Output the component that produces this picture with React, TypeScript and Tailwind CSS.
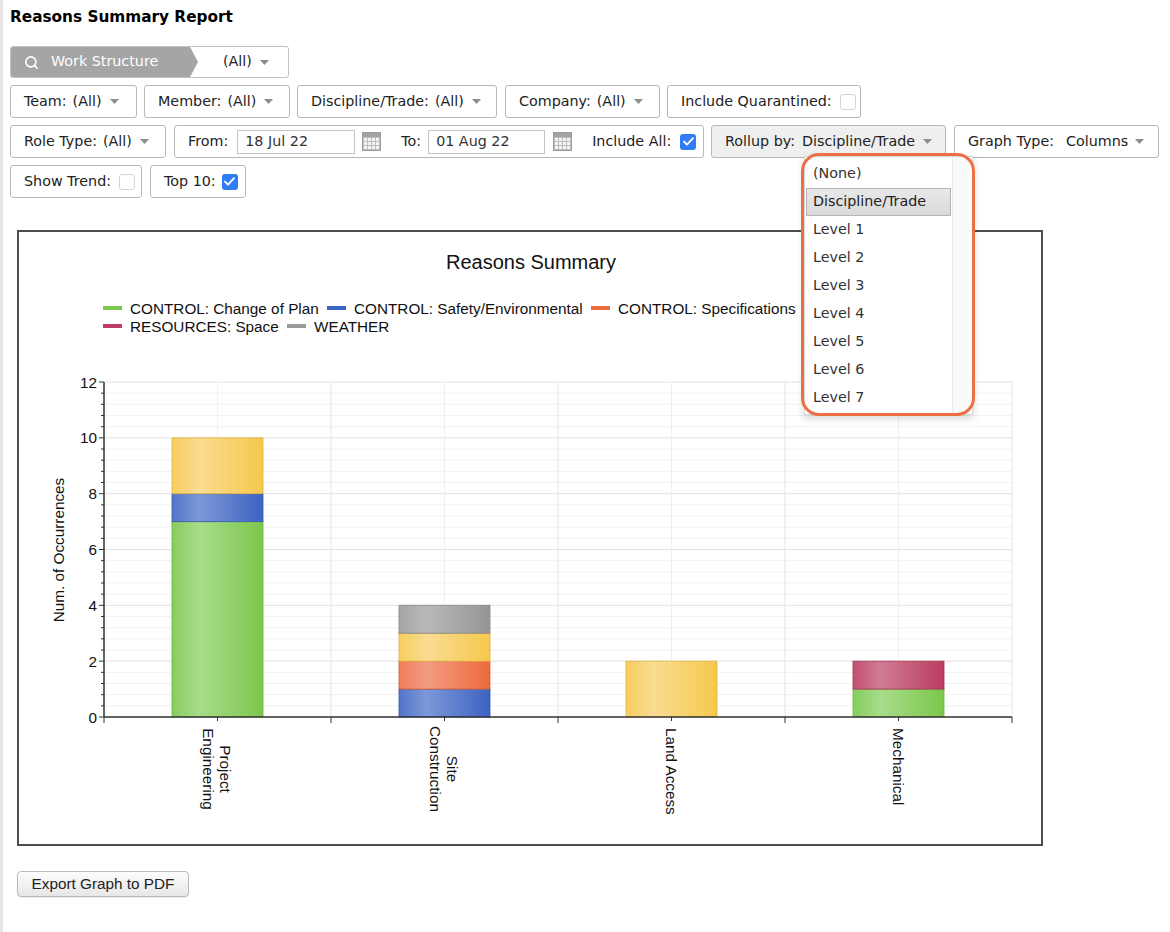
import type { ReactNode } from "react";
import { Search } from "lucide-react";

const FONT = "font-['DejaVu_Sans',Verdana,sans-serif]";
const ARIAL = "Liberation Sans, Arial, sans-serif";

function Caret({ className = "" }: { className?: string }) {
  return (
    <svg width="9" height="5" viewBox="0 0 9 5" className={`shrink-0 ${className}`}>
      <path d="M0 0h9L4.5 5z" fill="#8d8d8d" />
    </svg>
  );
}

function Checkbox({ checked, className = "" }: { checked?: boolean; className?: string }) {
  if (checked) {
    return (
      <span
        className={`flex h-[16px] w-[16px] shrink-0 items-center justify-center rounded-[3px] bg-[#2f7cf6] ${className}`}
      >
        <svg width="11" height="9" viewBox="0 0 11 9">
          <path d="M1 4.6l3 3L10 1.2" fill="none" stroke="white" strokeWidth="1.9" strokeLinecap="round" strokeLinejoin="round" />
        </svg>
      </span>
    );
  }
  return (
    <span
      className={`block h-[16px] w-[16px] shrink-0 rounded-[3px] border border-[#d6d6d6] bg-white ${className}`}
    />
  );
}

function CalendarIcon({ className = "" }: { className?: string }) {
  const cells = [];
  for (let r = 0; r < 3; r++) {
    for (let c = 0; c < 4; c++) {
      cells.push(<rect key={`${r}-${c}`} x={2 + c * 4} y={6 + r * 4} width="3" height="3" fill="#f4f4f4" />);
    }
  }
  return (
    <svg width="19" height="19" viewBox="0 0 19 19" className={`shrink-0 ${className}`}>
      <rect x="0.5" y="0.5" width="18" height="18" fill="#bdbdbd" stroke="#9b9b9b" />
      <rect x="1" y="1" width="17" height="4" fill="#a3a3a3" />
      {cells}
    </svg>
  );
}

function Box({ className = "", children }: { className?: string; children: ReactNode }) {
  return (
    <div
      className={`flex h-[33px] shrink-0 items-center rounded-[3px] border border-[#b8b8b8] pl-[13px] text-[14.3px] text-[#222] ${className}`}
    >
      {children}
    </div>
  );
}

function Select({ label, value, className }: { label: string; value: string; className: string }) {
  return (
    <Box className={`bg-white ${className}`}>
      <span>{label}</span>
      <span className="ml-[6px]">{value}</span>
      <Caret className="ml-[8px]" />
    </Box>
  );
}

const ROLLUP_OPTIONS = ["(None)", "Discipline/Trade", "Level 1", "Level 2", "Level 3", "Level 4", "Level 5", "Level 6", "Level 7"];

type Tone = "green" | "blue" | "yellow" | "orange" | "gray" | "crimson";

const TONES: Record<Tone, { edge: string; light: string; dark: string; solid: string }> = {
  green: { edge: "#86cd5e", light: "#a8dc8a", dark: "#7cc74c", solid: "#7dc94f" },
  blue: { edge: "#5275c9", light: "#7c98d9", dark: "#3d63c2", solid: "#3c66c6" },
  yellow: { edge: "#f7cd5e", light: "#f9dc92", dark: "#f6c84c", solid: "#f6c84c" },
  orange: { edge: "#f07d59", light: "#f39c80", dark: "#ec6a3e", solid: "#ee6b3f" },
  gray: { edge: "#a4a4a4", light: "#b9b9b9", dark: "#959595", solid: "#9b9b9b" },
  crimson: { edge: "#c34f70", light: "#d07d94", dark: "#ba3c60", solid: "#c03e63" },
};

const STROKES: Record<Tone, string> = {
  green: "#6db341",
  blue: "#3358b0",
  yellow: "#e2b341",
  orange: "#d85c33",
  gray: "#858585",
  crimson: "#a53253",
};

const DATA: { label: string[]; segs: [Tone, number][] }[] = [
  { label: ["Project", "Engineering"], segs: [["green", 7], ["blue", 1], ["yellow", 2]] },
  { label: ["Site", "Construction"], segs: [["blue", 1], ["orange", 1], ["yellow", 1], ["gray", 1]] },
  { label: ["Land Access"], segs: [["yellow", 2]] },
  { label: ["Mechanical"], segs: [["green", 1], ["crimson", 1]] },
];

const LEGEND: { tone: Tone; text: string; x: number; y: number }[] = [
  { tone: "green", text: "CONTROL: Change of Plan", x: 84, y: 76 },
  { tone: "blue", text: "CONTROL: Safety/Environmental", x: 308, y: 76 },
  { tone: "orange", text: "CONTROL: Specifications", x: 572, y: 76 },
  { tone: "crimson", text: "RESOURCES: Space", x: 84, y: 94 },
  { tone: "gray", text: "WEATHER", x: 268, y: 94 },
];

function Chart() {
  const x0 = 85;
  const x1 = 993;
  const y0 = 485;
  const unit = 335 / 12;
  const cat = (x1 - x0) / 4;
  const barW = 91;

  const minor = [];
  for (let i = 0; i <= 30; i++) {
    const y = y0 - i * 0.4 * unit;
    const major = i % 5 === 0;
    minor.push(
      <g key={i}>
        <line x1={x0} x2={x1} y1={y} y2={y} stroke={major ? "#e2e2e2" : "#f1f1f1"} strokeWidth="1" />
        <line x1={major ? x0 - 5 : x0 - 3} x2={x0} y1={y} y2={y} stroke="#333" strokeWidth="1" />
      </g>
    );
  }

  return (
    <svg width="1022" height="612" viewBox="0 0 1022 612" className="block">
      <defs>
        {(Object.keys(TONES) as Tone[]).map((t) => (
          <linearGradient key={t} id={`g-${t}`} x1="0" x2="1" y1="0" y2="0">
            <stop offset="0" stopColor={TONES[t].edge} />
            <stop offset="0.3" stopColor={TONES[t].light} />
            <stop offset="1" stopColor={TONES[t].dark} />
          </linearGradient>
        ))}
      </defs>

      <text x="512" y="30" textAnchor="middle" dominantBaseline="central" fontFamily={ARIAL} fontSize="20" fill="#111">
        Reasons Summary
      </text>

      {LEGEND.map((l) => (
        <g key={l.text}>
          <rect x={l.x} y={l.y - 2} width="19" height="4" fill={TONES[l.tone].solid} />
          <text x={l.x + 27} y={l.y} dominantBaseline="central" fontFamily={ARIAL} fontSize="15.3" fill="#111">
            {l.text}
          </text>
        </g>
      ))}

      {/* grid */}
      {minor}
      {[0, 1, 2, 3].map((i) => (
        <line key={`c${i}`} x1={x0 + cat * i + cat / 2} x2={x0 + cat * i + cat / 2} y1={y0 - 12 * unit} y2={y0} stroke="#f0f0f0" />
      ))}
      {[1, 2, 3, 4].map((i) => (
        <line key={`b${i}`} x1={x0 + cat * i} x2={x0 + cat * i} y1={y0 - 12 * unit} y2={y0} stroke="#e4e4e4" />
      ))}

      {/* bars */}
      {DATA.map((d, i) => {
        const cx = x0 + cat * i + cat / 2;
        let acc = 0;
        return (
          <g key={d.label.join(" ")}>
            {d.segs.map(([tone, v], j) => {
              const top = y0 - (acc + v) * unit;
              const h = v * unit;
              acc += v;
              return (
                <rect
                  key={j}
                  x={cx - barW / 2}
                  y={top}
                  width={barW}
                  height={h}
                  fill={`url(#g-${tone})`}
                  stroke={STROKES[tone]}
                  strokeWidth="1"
                  strokeOpacity="0.8"
                />
              );
            })}
          </g>
        );
      })}

      {/* axes */}
      <line x1={x0} x2={x0} y1={y0 - 12 * unit} y2={y0} stroke="#333" strokeWidth="1.5" />
      <line x1={x0} x2={x1} y1={y0} y2={y0} stroke="#333" strokeWidth="1.5" />
      {[0, 1, 2, 3, 4].map((i) => (
        <line key={`t${i}`} x1={x0 + cat * i} x2={x0 + cat * i} y1={y0} y2={y0 + 6} stroke="#333" />
      ))}
      {[0, 1, 2, 3].map((i) => (
        <line key={`m${i}`} x1={x0 + cat * i + cat / 2} x2={x0 + cat * i + cat / 2} y1={y0} y2={y0 + 4} stroke="#333" />
      ))}

      {[0, 2, 4, 6, 8, 10, 12].map((v) => (
        <text key={v} x="78" y={y0 - v * unit} textAnchor="end" dominantBaseline="central" fontFamily={ARIAL} fontSize="15.3" fill="#111">
          {v}
        </text>
      ))}

      <text
        transform="translate(39 318) rotate(-90)"
        textAnchor="middle"
        dominantBaseline="central"
        fontFamily={ARIAL}
        fontSize="15.3"
        fill="#111"
      >
        Num. of Occurrences
      </text>

      {DATA.map((d, i) => {
        const cx = x0 + cat * i + cat / 2;
        if (d.label.length === 1) {
          return (
            <text
              key={`l${i}`}
              transform={`translate(${cx} 496) rotate(90)`}
              dominantBaseline="central"
              fontFamily={ARIAL}
              fontSize="15.3"
              fill="#111"
            >
              {d.label[0]}
            </text>
          );
        }
        return (
          <g key={`l${i}`}>
            <text
              transform={`translate(${cx + 8} 537) rotate(90)`}
              textAnchor="middle"
              dominantBaseline="central"
              fontFamily={ARIAL}
              fontSize="15.3"
              fill="#111"
            >
              {d.label[0]}
            </text>
            <text
              transform={`translate(${cx - 9} 537) rotate(90)`}
              textAnchor="middle"
              dominantBaseline="central"
              fontFamily={ARIAL}
              fontSize="15.3"
              fill="#111"
            >
              {d.label[1]}
            </text>
          </g>
        );
      })}
    </svg>
  );
}

export default function App() {
  return (
    <div className={`min-h-[932px] w-full border-l-[3px] border-[#e6e6e6] bg-white pl-[7px] pt-[7px] ${FONT}`}>
      <h1 className="h-[20px] text-[15.3px] font-bold leading-[20px] text-black">Reasons Summary Report</h1>

      <div className="mt-[19px] flex flex-col gap-[7px]">
        {/* Work structure breadcrumb */}
        <div className="flex h-[32px] w-[279px] overflow-hidden rounded-[3px] border border-[#c2c2c2] bg-white text-[14.3px]">
          <div className="flex w-[187px] shrink-0 items-center bg-[#a5a5a5] pl-[13px] text-white [clip-path:polygon(0_0,179px_0,187px_50%,179px_100%,0_100%)]">
            <Search size={15} strokeWidth={2.6} />
            <span className="ml-[12px]">Work Structure</span>
          </div>
          <div className="flex items-center pl-[25px] text-[#222]">
            <span>(All)</span>
            <Caret className="ml-[8px]" />
          </div>
        </div>

        <div className="flex gap-[7px]">
          <Select label="Team:" value="(All)" className="w-[127px]" />
          <Select label="Member:" value="(All)" className="w-[146px]" />
          <Select label="Discipline/Trade:" value="(All)" className="w-[200px]" />
          <Select label="Company:" value="(All)" className="ml-[1px] w-[155px]" />
          <Box className="w-[194px] bg-white">
            <span>Include Quarantined:</span>
            <Checkbox className="ml-[8px]" />
          </Box>
        </div>

        <div className="flex gap-[7px]">
          <Select label="Role Type:" value="(All)" className="w-[156px]" />
          <Box className="ml-[1px] w-[530px] bg-white">
            <span>From:</span>
            <div className="ml-[9px] flex h-[24px] w-[118px] items-center border border-[#c4c4c4] pl-[7px] text-[#333]">18 Jul 22</div>
            <CalendarIcon className="ml-[7px]" />
            <span className="ml-[20px]">To:</span>
            <div className="ml-[7px] flex h-[24px] w-[117px] items-center border border-[#c4c4c4] pl-[7px] text-[#333]">01 Aug 22</div>
            <CalendarIcon className="ml-[8px]" />
            <span className="ml-[20px]">Include All:</span>
            <Checkbox checked className="ml-[9px]" />
          </Box>
          <div className="relative">
            <Box className="w-[235px] bg-[#efefef] pl-[12px]">
              <span>Rollup by:</span>
              <span className="ml-[7px]">Discipline/Trade</span>
              <Caret className="ml-[8px]" />
            </Box>
            {/* open dropdown */}
            <div className="absolute left-[93px] top-[31px] z-10 flex h-[259px] w-[169px] border border-[#d8d8d8] bg-white shadow-[0_3px_8px_rgba(0,0,0,0.18)]">
              <div className="flex w-[147px] flex-col pt-[3px] text-[14.3px] text-[#333]">
                {ROLLUP_OPTIONS.map((o) =>
                  o === "Discipline/Trade" ? (
                    <div
                      key={o}
                      className="ml-[1px] flex h-[28px] w-[145px] items-center border border-[#b4b4b4] bg-[linear-gradient(#e9e9e9,#d9d9d9)] pl-[6px] text-[#222]"
                    >
                      {o}
                    </div>
                  ) : (
                    <div key={o} className="flex h-[28px] items-center pl-[8px]">
                      {o}
                    </div>
                  )
                )}
              </div>
              <div className="w-[18px] border-l border-[#ececec] bg-[#f9f9f9]" />
            </div>
            <div className="pointer-events-none absolute left-[90px] top-[28px] z-20 h-[263px] w-[174px] rounded-[18px] border-[3px] border-[#ef6f45]" />
          </div>
          <Box className="ml-[1px] w-[205px] bg-white">
            <span>Graph Type:</span>
            <span className="ml-[12px]">Columns</span>
            <Caret className="ml-[7px]" />
          </Box>
        </div>

        <div className="flex gap-[7px]">
          <Box className="w-[132px] bg-white">
            <span>Show Trend:</span>
            <Checkbox className="ml-[8px]" />
          </Box>
          <Box className="ml-[1px] w-[96px] bg-white">
            <span>Top 10:</span>
            <Checkbox checked className="ml-[6px]" />
          </Box>
        </div>
      </div>

      <div className="ml-[7px] mt-[32px] w-[1026px] border-2 border-[#4d4d4d] bg-white">
        <Chart />
      </div>

      <button
        type="button"
        className="ml-[7px] mt-[25px] flex h-[26px] w-[172px] items-center justify-center rounded-[4px] border border-[#b9b9b9] bg-[linear-gradient(#fdfdfd,#e7e7e7)] font-['Liberation_Sans',Arial,sans-serif] text-[15.3px] text-[#222] shadow-[0_1px_1px_rgba(0,0,0,0.08)]"
      >
        Export Graph to PDF
      </button>
    </div>
  );
}
